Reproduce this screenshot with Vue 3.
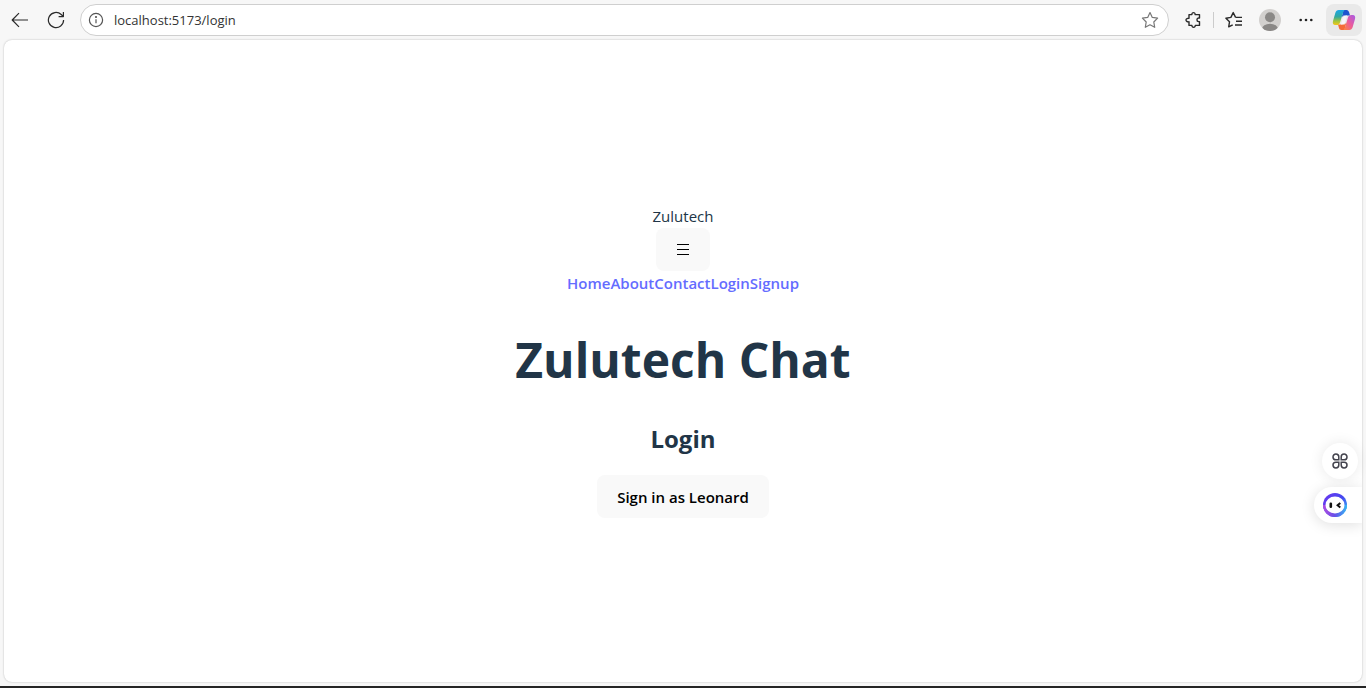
<script setup>
import { ref } from 'vue'

const address = ref('localhost:5173/login')
const links = ['Home', 'About', 'Contact', 'Login', 'Signup']
</script>

<template>
  <div class="browser">
    <header class="toolbar">
      <button class="tool" type="button" aria-label="Back">
        <svg width="18" height="16" viewBox="0 0 18 16" class="line"><path d="M17 8H1.5M8 1.2 1.2 8 8 14.8" /></svg>
      </button>
      <button class="tool" type="button" aria-label="Refresh">
        <svg width="18" height="18" viewBox="0 0 18 18" class="line"><path d="M16.6 9A7.6 7.6 0 1 1 14.2 3.5L16.2 5.4M16.4 1V5.6H11.6" /></svg>
      </button>
      <form class="address" @submit.prevent>
        <button class="plain" type="button" aria-label="Site information">
          <svg width="16" height="16" viewBox="0 0 16 16" class="line soft"><circle cx="8" cy="8" r="6.6" /><path d="M8 7.2V11.2" /><circle cx="8" cy="5" r=".5" /></svg>
        </button>
        <input v-model="address" class="url" type="text" aria-label="Address" spellcheck="false" />
        <button class="plain" type="button" aria-label="Add to favorites">
          <svg width="18" height="18" viewBox="0 0 18 18" class="line pale"><path d="m9 1.6 2.3 4.8 5.3.8-3.8 3.8.9 5.3L9 13.8l-4.7 2.5.9-5.3L1.4 7.2l5.3-.8Z" /></svg>
        </button>
      </form>
      <button class="tool extensions" type="button" aria-label="Extensions">
        <svg width="18" height="18" viewBox="0 0 18 18" class="line bold"><path d="M5 3.6H7.9C7.5 1 11.5 1 11.100 3.6H15.500V7H14.600C12.400 7 12.400 10.600 14.600 10.600H15.500V14.400H11.300C11.500 17 7.700 17 7.900 14.400H5V10.800C1 11.200 1 7 5 7.300Z" /></svg>
      </button>
      <span class="divider"></span>
      <button class="tool favorites" type="button" aria-label="Favorites">
        <svg width="18" height="18" viewBox="0 0 18 18" class="line bold"><path d="M10.6 6.4 8.2 1.6 5.9 6.4.9 7.2l3.6 3.6-.8 5.1 4-2.1M10.6 6.4H17M11 10.2h6M10 14h7" /></svg>
      </button>
      <button class="tool" type="button" aria-label="Profile">
        <svg width="22" height="22" viewBox="0 0 22 22">
          <defs><clipPath id="face"><circle cx="11" cy="11" r="11" /></clipPath></defs>
          <g clip-path="url(#face)"><path fill="#d2d0ce" d="M0 0h22v22H0z" /><circle cx="11" cy="8.3" r="5" fill="#8a8886" /><ellipse cx="11" cy="20" rx="8" ry="5.2" fill="#8a8886" /></g>
        </svg>
      </button>
      <button class="tool" type="button" aria-label="Settings and more">
        <svg width="16" height="16" viewBox="0 0 16 16" fill="#222"><circle cx="2.7" cy="8" r="1.3" /><circle cx="8" cy="8" r="1.3" /><circle cx="13.3" cy="8" r="1.3" /></svg>
      </button>
      <button class="copilot" type="button" aria-label="Copilot">
        <svg width="24" height="22" viewBox="0 0 24 22">
          <defs>
            <linearGradient id="cool" x1="0" y1="0" x2="0" y2="1"><stop stop-color="#1aa5e8" /><stop offset=".45" stop-color="#32a8a0" /><stop offset=".75" stop-color="#a5c63b" /><stop offset="1" stop-color="#f5c51b" /></linearGradient>
            <linearGradient id="warm" x1="1" y1="0" x2="0" y2="1"><stop stop-color="#a45be8" /><stop offset=".5" stop-color="#eb5b9c" /><stop offset="1" stop-color="#ff8a35" /></linearGradient>
          </defs>
          <path fill="#1d55cf" d="M11.500 1h3.100c1.400 0 2.100 1 2.500 2.300L18 6.500h-3c-1.600 0-2.600.6-3.200 2L10 7Z" />
          <path fill="#f46b38" d="M12.500 21H9.400c-1.400 0-2.100-1-2.500-2.300L6 15.500h3c1.600 0 2.600-.6 3.200-2L14 15Z" />
          <path fill="#f7f5fa" d="M11.400 6.500H15L12.600 15.500H9Z" />
          <path fill="url(#cool)" d="M6.800 1h6.400c-1.300.3-1.800 1.400-2.200 2.800L8.100 13.200c-.6 2-1.500 2.800-3.400 2.800H3.300C1 16 .4 14.200 1 12L3.300 4C3.900 2 5 1 6.800 1Z" />
          <path fill="url(#warm)" d="M17.200 21h-6.400c1.300-.3 1.800-1.400 2.200-2.800l2.900-9.400c.6-2 1.500-2.800 3.400-2.800h1.400c2.300 0 2.900 1.800 2.300 4L20.700 18c-.6 2-1.700 3-3.500 3Z" />
        </svg>
      </button>
    </header>

    <main class="page">
      <div class="content">
        <div class="brand">Zulutech</div>
        <button class="btn" type="button" aria-label="Menu">
          <svg width="14" height="18" viewBox="0 0 14 18" class="menu"><path d="M1 3.5h12M1 8.5h12M1 13.5h12" /></svg>
        </button>
        <nav class="nav"><a v-for="link in links" :key="link" :href="'/' + link.toLowerCase()">{{ link }}</a></nav>
        <h1>Zulutech Chat</h1>
        <h2>Login</h2>
        <button class="btn" type="button">Sign in as Leonard</button>
      </div>

      <aside class="dock">
        <button class="apps" type="button" aria-label="Apps">
          <svg width="16" height="16" viewBox="0 0 16 16"><path d="M6.800 6.800H3.900A2.900 2.900 0 1 1 6.800 3.900ZM9.200 6.800V3.900A2.900 2.900 0 1 1 12.100 6.800ZM6.800 9.200V12.100A2.900 2.900 0 1 1 3.900 9.200ZM9.200 9.200H12.100A2.900 2.900 0 1 1 9.200 12.100Z" /></svg>
        </button>
        <button class="assistant" type="button" aria-label="Assistant">
          <svg width="24" height="24" viewBox="0 0 24 24">
            <defs>
              <linearGradient id="ring" x1="0" y1=".2" x2="1" y2=".8"><stop stop-color="#6938ef" /><stop offset=".6" stop-color="#4548f0" /><stop offset="1" stop-color="#35b5f5" /></linearGradient>
              <linearGradient id="lower" x1="0" y1="0" x2="1" y2="0"><stop stop-color="#b04be0" /><stop offset=".5" stop-color="#6750e8" /><stop offset="1" stop-color="#32b9f4" /></linearGradient>
            </defs>
            <circle cx="12" cy="12" r="12" fill="url(#ring)" /><path fill="url(#lower)" d="M0 12h24A12 12 0 0 1 0 12Z" /><ellipse cx="12" cy="12" rx="9.5" ry="8.5" fill="#fff" />
            <rect x="6.5" y="9.5" width="2.6" height="5.5" rx="1.2" fill="#111" /><path d="m17.3 10-2.7 2.3 2.7 2.2" fill="none" stroke="#111" stroke-width="2" />
          </svg>
        </button>
      </aside>
    </main>
    <footer class="taskbar"></footer>
  </div>
</template>

<style>
body {
  margin: 0;
  background: #f7f7f7;
}
</style>

<style scoped>
.browser {
  display: flex;
  flex-direction: column;
  min-height: 100vh;
  overflow: hidden;
  font-family: "Segoe UI", "Open Sans", "Noto Sans", sans-serif;
  color: #213547;
}
* { box-sizing: border-box; }
button {
  padding: 0;
  border: 0;
  background: none;
  font: inherit;
  color: inherit;
  cursor: pointer;
}
svg { display: block; }
.toolbar {
  display: flex;
  align-items: center;
  height: 40px;
  padding: 0 4px 0 2px;
}
.tool {
  display: grid;
  place-items: center;
  flex: none;
  width: 36px;
  height: 32px;
}
.line {
  fill: none;
  stroke: #2b2b2b;
  stroke-width: 1.2;
  stroke-linejoin: round;
}
.soft { stroke: #555; }
.pale { stroke: #777; }
.bold { stroke-width: 1.4; }
.address {
  display: flex;
  align-items: center;
  flex: 1;
  gap: 10px;
  height: 32px;
  margin-left: 6px;
  padding: 0 9px 0 7px;
  border: 1px solid #cfcfcf;
  border-radius: 16px;
  background: #fff;
}
.url {
  flex: 1;
  min-width: 0;
  padding: 0;
  border: 0;
  outline: 0;
  background: none;
  font-family: inherit;
  font-size: 13px;
  line-height: 20px;
  color: #333;
}
.extensions { margin-left: 6px; }
.divider {
  width: 1px;
  height: 16px;
  margin: 0 2px;
  background: #ccc;
}
.copilot {
  display: grid;
  place-items: center;
  flex: none;
  width: 36px;
  height: 32px;
  margin-left: 2px;
  border-radius: 8px;
  background: #e9e9e9;
}
.page {
  position: relative;
  display: grid;
  place-items: center;
  flex: 1;
  margin: 0 4px 4px;
  border-radius: 8px;
  background: #fff;
  box-shadow: 0 0 2px #0004;
}
.content {
  padding-bottom: 1px;
  text-align: center;
  font-size: 15px;
  line-height: 24px;
}
.btn {
  padding: 10px 20px 9px;
  border-radius: 8px;
  background: #f9f9f9;
  font-weight: 600;
  color: #000;
  vertical-align: top;
}
.menu {
  height: 24px;
  fill: none;
  stroke: #000;
  stroke-width: 1.2;
}
.nav {
  display: flex;
  justify-content: center;
}
.nav a {
  font-weight: 600;
  color: #646cff;
  text-decoration: none;
}
h1 {
  margin: 37px 0 33px;
  font-size: 48px;
  line-height: 56px;
}
h2 {
  margin: 0 0 18px;
  font-size: 24px;
  line-height: 36px;
}
.dock {
  position: absolute;
  top: 403px;
  right: 0;
  display: flex;
  flex-direction: column;
  align-items: flex-end;
  gap: 8px;
}
.apps {
  display: grid;
  place-items: center;
  width: 36px;
  height: 36px;
  margin-right: 4px;
  border-radius: 18px;
  background: #fff;
  box-shadow: 0 0 14px #00000018;
}
.apps svg {
  fill: none;
  stroke: #43434d;
  stroke-width: 1.5;
}
.assistant {
  width: 48px;
  height: 36px;
  padding-left: 9px;
  border-radius: 18px 0 0 18px;
  background: #fff;
  box-shadow: 0 2px 14px #00000020;
  clip-path: inset(-20px 0 -20px -20px);
}
.taskbar {
  height: 2px;
  background: #252525;
}
</style>
